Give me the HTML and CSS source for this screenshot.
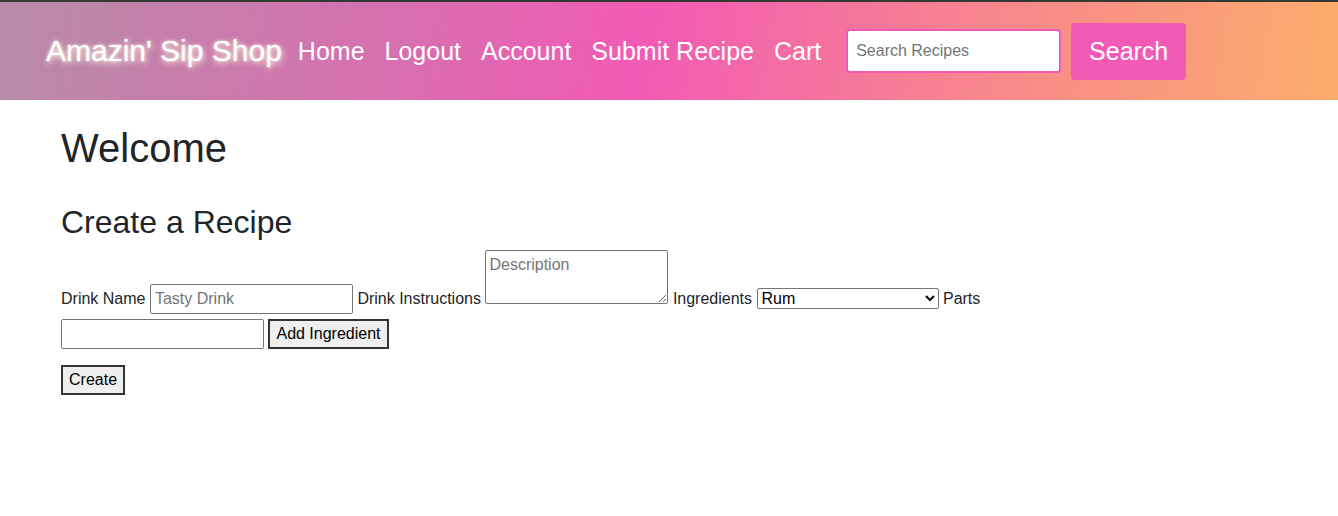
FILE: index.html
```html
<!DOCTYPE html>
<html>
<head>
<meta charset="utf-8">
<title>Amazin' Sip Shop</title>
<link rel="stylesheet" href="styles.css">
</head>
<body>
<nav class="navbar">
  <a class="brand" href="#">Amazin' Sip Shop</a>
  <ul class="links">
    <li><a href="#">Home</a></li>
    <li><a href="#">Logout</a></li>
    <li><a href="#">Account</a></li>
    <li><a href="#">Submit Recipe</a></li>
    <li><a href="#">Cart</a></li>
  </ul>
  <form class="search">
    <input class="search-input" type="text" placeholder="Search Recipes">
    <button class="search-btn" type="button">Search</button>
  </form>
</nav>
<main class="container">
  <h1 class="title">Welcome</h1>
  <h2 class="subtitle">Create a Recipe</h2>
  <form class="recipe">
    <div class="fields">
      <label>Drink Name</label> <input class="field" type="text" placeholder="Tasty Drink"> <label>Drink Instructions</label> <textarea class="desc" placeholder="Description"></textarea> <label>Ingredients</label> <select class="pick"><option>Rum</option></select> <label>Parts</label> <input class="field" type="text"> <button class="btn" type="button">Add Ingredient</button>
    </div>
    <div class="actions">
      <button class="btn" type="button">Create</button>
    </div>
  </form>
</main>
</body>
</html>
```

FILE: styles.css
```css
* { box-sizing: border-box; }
body {
  margin: 0;
  font-family: "Liberation Sans", Arial, sans-serif;
  color: #212529;
  background: #fff;
}
.navbar {
  height: 100px;
  border-top: 2px solid #333a33;
  background: linear-gradient(100deg, #b78ba7 0%, #d86fb0 30%, #f25ab5 48%, #f7848f 72%, #fbad6b 100%);
  display: flex;
  align-items: center;
  padding-left: 46px;
}
.brand {
  font-size: 30px;
  color: #fff;
  text-decoration: none;
  text-shadow: 1px 2px 6px #fffbe0, 0 0 3px rgba(255,255,230,0.8);
  margin-right: 16px;
}
.links {
  list-style: none;
  margin: 0;
  padding: 0;
  display: flex;
  gap: 20px;
}
.links a {
  font-size: 25px;
  color: #fff;
  text-decoration: none;
}
.search {
  display: flex;
  align-items: center;
  margin-left: 25px;
  gap: 10px;
}
.search-input {
  width: 215px;
  height: 44px;
  border: 2px solid #f25ab5;
  border-radius: 4px;
  padding: 0 8px;
  font-family: "Liberation Sans", Arial, sans-serif;
  font-size: 16px;
  background: #fff;
  outline: none;
}
.search-input::placeholder { color: #757575; }
.search-btn {
  width: 115px;
  height: 57px;
  border: none;
  border-radius: 4px;
  background: #f25ab5;
  color: #fff;
  font-family: "Liberation Sans", Arial, sans-serif;
  font-size: 25px;
  padding: 0;
}
.container {
  padding-left: 61px;
}
.title {
  font-size: 40px;
  font-weight: 400;
  line-height: 1.2;
  margin: 24px 0 8px;
}
.subtitle {
  font-size: 32px;
  font-weight: 400;
  line-height: 1.2;
  margin: 31px 0 9px;
}
.recipe {
  font-size: 16px;
  width: 930px;
}
.fields { line-height: 1.15; }
.field {
  width: 203px;
  height: 30px;
  border: 1px solid #767676;
  border-radius: 2px;
  padding: 0 4px;
  font-family: "Liberation Sans", Arial, sans-serif;
  font-size: 16px;
  margin: 3px 0 2px;
  vertical-align: baseline;
}
.field::placeholder, .desc::placeholder { color: #757575; }
.desc {
  width: 183px;
  height: 54px;
  border: 1px solid #767676;
  border-radius: 2px;
  padding: 5px 3px 2px;
  font-family: "Liberation Sans", Arial, sans-serif;
  font-size: 16px;
  margin: 0;
  vertical-align: baseline;
}
.pick {
  width: 182px;
  height: 21px;
  border: 1px solid #767676;
  border-radius: 2px;
  font-family: "Liberation Sans", Arial, sans-serif;
  font-size: 16px;
  padding: 0;
  background: #fff;
  color: #000;
}
.btn {
  height: 30px;
  border: 2px solid #333;
  background: #efefef;
  font-family: "Liberation Sans", Arial, sans-serif;
  font-size: 16px;
  color: #000;
  padding: 0 6px;
  margin: 3px 0 2px;
}
.actions { margin-top: 11px; }
```
